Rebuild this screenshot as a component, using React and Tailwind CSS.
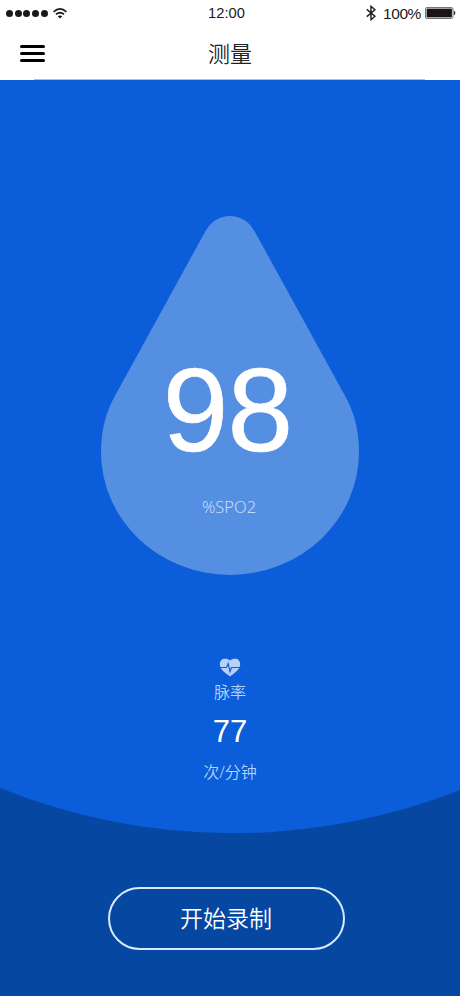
import React from "react";

const CJK = "font-['Noto_Sans','Noto_Sans_CJK_SC',sans-serif]";

function StatusBar() {
  return (
    <div className="grid h-[27px] grid-cols-3 items-center text-[#1a1a1a]">
      <div className="flex items-center pl-[6px]">
        <div className="flex gap-[1.7px]">
          {[0, 1, 2, 3, 4].map((i) => (
            <span key={i} className="size-[7px] rounded-full bg-[#1a1a1a]" />
          ))}
        </div>
        <svg className="-mt-px ml-[5px] h-[11px] w-[14px]" viewBox="0 0 14 11" fill="none" stroke="currentColor" strokeWidth="1.6">
          <path d="M.6 3.8Q7-1.9 13.4 3.8M2.9 6.3Q7 2.8 11.1 6.3" />
          <path d="M4.7 8.3Q7 6.5 9.3 8.3L7 10.6Z" fill="currentColor" stroke="none" />
        </svg>
      </div>
      <div className="pr-[7px] text-center text-[14.7px] leading-none">12:00</div>
      <div className="flex items-center justify-end pr-[4px]">
        <svg className="-mt-px h-[16px] w-[10px]" viewBox="0 0 10 16" fill="none" stroke="currentColor" strokeWidth="1.4">
          <path d="M.8 4.4L9 11.3L5 14.7V1.3L9 4.7L.8 11.6" />
        </svg>
        <span className="ml-[7px] text-[15.5px] leading-none tracking-[-0.4px]">100%</span>
        <svg className="-mt-px ml-[4px] h-[12px] w-[31px]" viewBox="0 0 31 12">
          <rect x=".5" y=".5" width="27.5" height="11" rx="1.5" fill="none" stroke="#777" />
          <rect x="1.6" y="1.6" width="25.3" height="8.8" fill="#1a1414" />
          <path d="M28.8 3.8Q30.4 4 30.4 6T28.8 8.2Z" fill="#333" />
        </svg>
      </div>
    </div>
  );
}

function Header() {
  return (
    <div className="grid h-[53px] grid-cols-[45px_1fr_45px] grid-rows-[52px_1px]">
      <button className="flex flex-col justify-center gap-[4.3px] pt-px pl-[20px]" aria-label="菜单">
        <span className="h-[2.5px] w-[25px] rounded-full bg-black" />
        <span className="h-[2.5px] w-[25px] rounded-full bg-black" />
        <span className="h-[2.5px] w-[25px] rounded-full bg-black" />
      </button>
      <h1 className={`${CJK} pt-[10px] text-center text-[22px] leading-[32px] font-[350] text-[#222]`}>测量</h1>
      <div />
      <div className="col-span-3 mr-[35px] ml-[34px] bg-[#b9bdc9]" />
    </div>
  );
}

function HeartPulse() {
  return (
    <svg className="h-[19px] w-[22px]" viewBox="0 0 22 19">
      <path d="M11 18.4C8.5 16.7 .8 12 .8 6.5C.8 2.8 3.1 .8 5.8 .8C8.1 .8 10 1.4 11 2.6C12 1.4 13.9 .8 16.2 .8C18.9 .8 21.2 2.8 21.2 6.5C21.2 12 13.5 16.7 11 18.4Z" fill="#b6d2fb" />
      <path d="M1 9.5H7.5L9.2 5.6L11 13.6L12.6 9.5H21" fill="none" stroke="#0b5dd9" strokeWidth="1.2" />
    </svg>
  );
}

export default function App() {
  return (
    <div className="flex h-[996px] w-[460px] flex-col overflow-hidden bg-white font-['Liberation_Sans',Arial,sans-serif]">
      <StatusBar />
      <Header />
      <main className="relative isolate flex flex-1 flex-col items-center bg-[#0647a1]">
        <svg className="absolute inset-0 -z-10 h-[916px] w-[460px]" viewBox="0 80 460 916">
          <path d="M0 80H460V790A620 620 0 0 1 0 788Z" fill="#0b5dd9" />
          <path d="M205 232C211 221 220 216 230 216C240 216 249 221 255 232L344 394C354 411 359 430 359 452A129 123 0 0 1 101 452C101 430 106 411 116 394Z" fill="#558fe2" />
        </svg>
        <section className="mt-[136px] flex h-[359px] w-[258px] flex-col items-center text-white">
          <div className="mt-[134px] -ml-[5px] text-[118px] leading-[120px] tracking-[-0.8px] [-webkit-text-stroke:0.7px_white]">98</div>
          <div className={`${CJK} mt-[25px] -ml-[2px] text-[16.5px] leading-[24px] font-[350] text-[#c5dcfa]`}>%SPO2</div>
        </section>
        <section className="mt-[83px] flex h-[127px] flex-col items-center text-[#b6d2fb]">
          <HeartPulse />
          <div className={`${CJK} mt-[3px] text-[16px] leading-[24px] font-[350]`}>脉率</div>
          <div className="mt-[10px] text-[31px] leading-[36px] text-white">77</div>
          <div className={`${CJK} mt-[10px] text-[16px] leading-[24px] font-[350]`}>次/分钟</div>
        </section>
        <button className={`${CJK} mt-[102px] mr-[8px] h-[63px] w-[237px] rounded-full border-2 border-[#d8eafc] text-[23px] font-[350] text-white`}>
          开始录制
        </button>
      </main>
    </div>
  );
}
